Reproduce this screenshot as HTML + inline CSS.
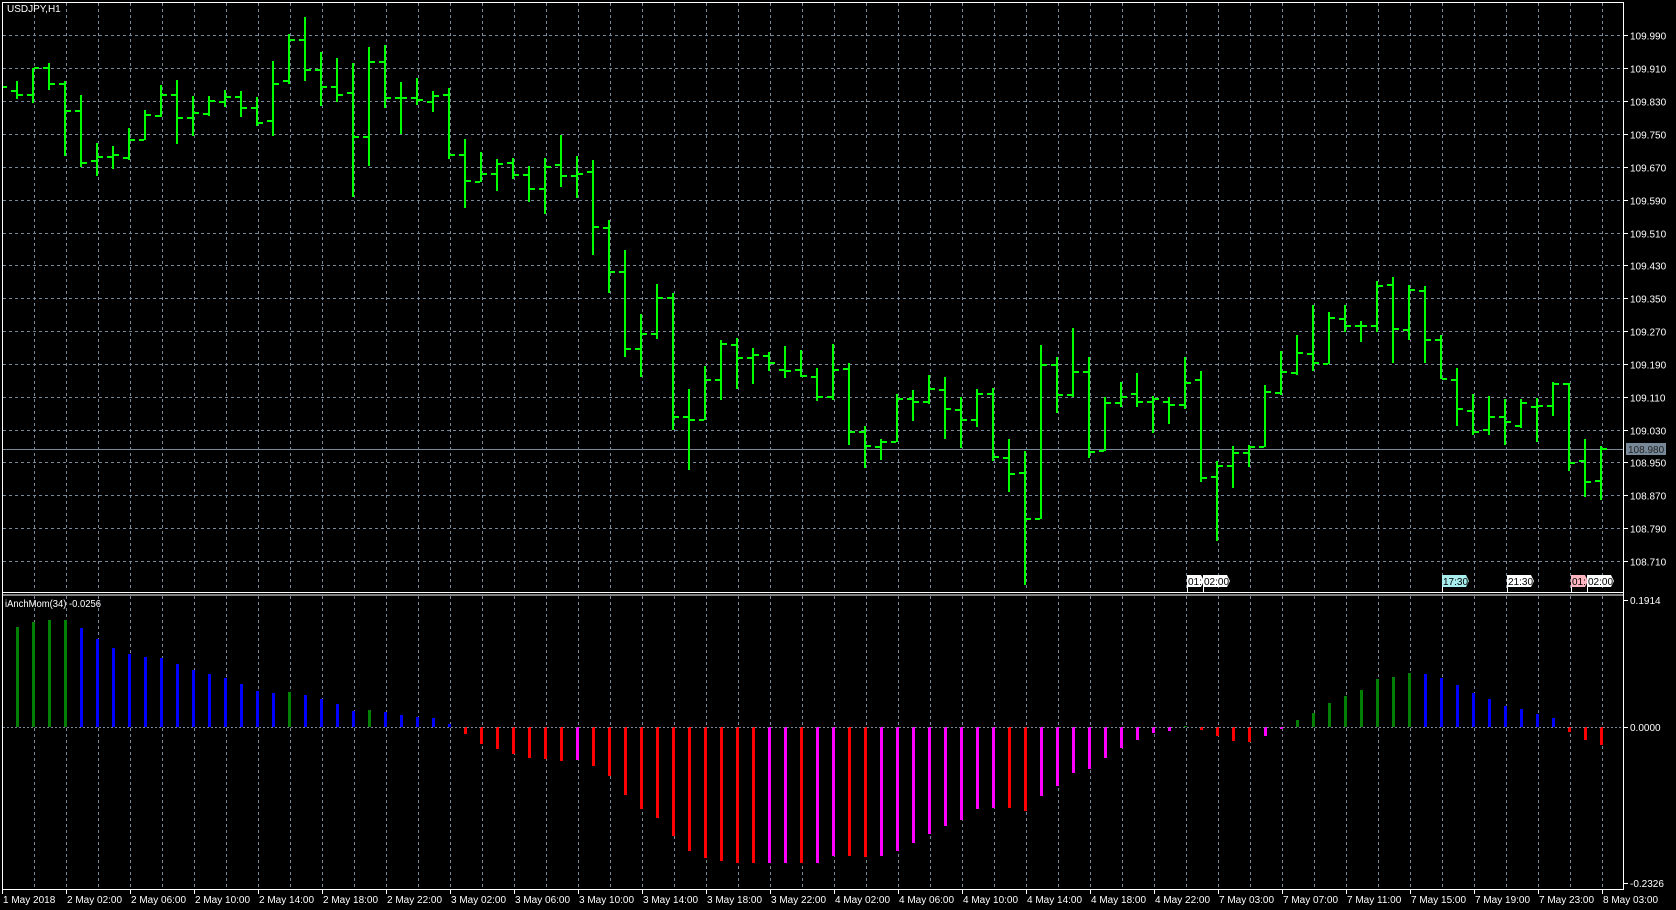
<!DOCTYPE html>
<html><head><meta charset="utf-8">
<style>
html,body{margin:0;padding:0;background:#000;overflow:hidden}
svg{display:block}
text{font-family:"Liberation Sans",sans-serif;font-size:10px;fill:#fff}
</style></head>
<body>
<svg id="s" width="1676" height="910" xmlns="http://www.w3.org/2000/svg" shape-rendering="crispEdges"></svg>
<script>
const S=document.getElementById('s');
let h='';
h+='<rect x="0" y="0" width="1676" height="910" fill="#000"/>';
const G='#778899';
for(let x=34;x<1623;x+=32){
 h+=`<line x1="${x+0.5}" y1="3" x2="${x+0.5}" y2="591" stroke="${G}" stroke-dasharray="3,3"/>`;
 h+=`<line x1="${x+0.5}" y1="596" x2="${x+0.5}" y2="888" stroke="${G}" stroke-dasharray="3,3"/>`;
}
const labs=["109.990","109.910","109.830","109.750","109.670","109.590","109.510","109.430","109.350","109.270","109.190","109.110","109.030","108.950","108.870","108.790","108.710"];
for(let k=0;k<labs.length;k++){
 const y=Math.round(35.4+32.85*k)+0.5;
 h+=`<line x1="3" y1="${y}" x2="1623" y2="${y}" stroke="${G}" stroke-dasharray="3,3"/>`;
 h+=`<line x1="1623" y1="${y}" x2="1628" y2="${y}" stroke="#fff"/>`;
 h+=`<text x="1630" y="${y+4}">${labs[k]}</text>`;
}
h+=`<line x1="3" y1="449.5" x2="1623" y2="449.5" stroke="${G}"/>`;
h+=`<rect x="1626" y="443" width="40" height="12" fill="${G}"/>`;
h+=`<text x="1628" y="453" style="fill:#222">108.980</text>`;
const B=[[215,262,243,252],[180,275,252,180],[168,240,180,222],[215,415,222,295],[253,444,295,433],[380,468,427,416],[389,450,416,411],[341,425,419,371],[292,372,372,305],[227,312,308,252],[213,382,252,313],[256,362,313,301],[256,308,302,269],[240,285,270,257],[243,312,259,286],[258,335,286,326],[163,362,321,222],[90,224,214,107],[44,214,107,187],[138,283,187,232],[155,272,232,252],[168,524,248,364],[126,442,364,166],[120,288,166,260],[218,357,260,260],
[208,278,260,265],[242,298,270,255],[235,422,252,413],[370,552,413,480],[405,485,483,462],[423,507,462,436],[420,477,432,464],[442,538,464,502],[420,568,502,443],[359,498,438,469],[415,525,469,462],[425,679,456,603],[585,780,605,722],[664,948,722,927],[834,1003,927,889],[755,900,889,793],[779,1142,793,1108],[1034,1250,1108,1116],[973,1117,1116,1010],[905,1062,1010,914],[899,1033,916,951],[925,1020,951,943],[935,985,945,964],[920,1004,983,986],[931,1003,983,999],[978,1067,1001,1054],
[914,1062,1054,983],[966,1182,980,1148],[1132,1245,1148,1185],[1167,1224,1188,1174],[1047,1175,1174,1060],[1036,1118,1060,1068],[996,1075,1068,1033],[1003,1166,1036,1086],[1055,1191,1089,1116],[1034,1134,1116,1046],[1031,1225,1046,1214],[1167,1308,1217,1260],[1199,1555,1256,1380],[917,1380,1380,969],[949,1099,969,1049],[872,1056,1049,988],[948,1218,988,1201],[1055,1198,1198,1071],[1015,1081,1071,1054],[991,1081,1046,1068],[1052,1150,1068,1060],[1055,1128,1068,1076],[948,1086,1076,1017],[986,1280,1010,1270],[1225,1437,1267,1238],[1186,1298,1238,1204],
[1184,1240,1204,1189],[1024,1188,1188,1041],[932,1049,1045,988],[890,996,991,937],[810,985,940,964],[829,968,968,845],[810,882,847,867],[853,908,867,866],[746,882,866,759],[735,965,757,875],[757,905,877,770],[760,965,773,903],[890,1007,903,1007],[978,1131,1010,1088],[1046,1157,1092,1147],[1052,1155,1144,1108],[1061,1182,1108,1121],[1061,1138,1133,1072],[1058,1174,1082,1080],[1016,1107,1078,1022],[1018,1252,1020,1230],[1168,1320,1226,1280],[1185,1330,1278,1193]];
const C='#00ff00';
const f=v=>Math.round(v/2.658);
h+=`<rect x="3" y="${f(230)-1}" width="4" height="2" fill="${C}"/>`;
B.forEach((b,i)=>{
 const x=17+16*i;
 const yh=f(b[0]),yl=f(b[1]),yo=f(b[2]),yc=f(b[3]);
 h+=`<rect x="${x-1}" y="${yh}" width="2" height="${Math.max(1,yl-yh)}" fill="${C}"/>`;
 h+=`<rect x="${x-6}" y="${yo-1}" width="5" height="2" fill="${C}"/>`;
 h+=`<rect x="${x+1}" y="${yc-1}" width="5" height="2" fill="${C}"/>`;
});
const Z=727;
const I=[[117,'g'],[101,'g'],[96,'g'],[96,'g'],[120,'b'],[153,'b'],[180,'b'],[198,'b'],[207,'b'],[210,'b'],[228,'b'],[246,'b'],[258,'b'],[270,'b'],[288,'b'],[310,'b'],[315,'b'],[312,'g'],[321,'b'],[333,'b'],[348,'b'],[369,'b'],[366,'g'],[372,'b'],[381,'b'],[387,'b'],[390,'b'],[407,'b'],
[437,'r'],[467,'r'],[482,'r'],[497,'r'],[510,'r'],[513,'r'],[518,'r'],[515,'m'],[533,'r'],[563,'r'],[620,'r'],[662,'r'],[689,'r'],[743,'r'],[789,'r'],[809,'r'],[818,'r'],[824,'r'],[824,'r'],[824,'m'],[824,'m'],[824,'r'],[824,'m'],[803,'m'],
[803,'r'],[806,'r'],[803,'m'],[788,'m'],[764,'m'],[737,'m'],[713,'m'],[695,'m'],[662,'m'],[659,'m'],[659,'r'],[668,'r'],[623,'m'],[593,'m'],[554,'m'],[542,'m'],[509,'m'],[479,'m'],[455,'m'],[434,'m'],[428,'m'],[414,'g'],[425,'r'],[443,'r'],[458,'r'],[461,'r'],[443,'m'],[422,'m'],[396,'g'],[375,'g'],[345,'g'],[324,'g'],[306,'g'],[273,'g'],[267,'g'],[255,'g'],[258,'b'],[269,'b'],[291,'b'],[315,'b'],[333,'b'],[354,'b'],[363,'b'],[378,'b'],[390,'b'],[431,'r'],[455,'r'],[470,'r']];
const col={g:'#008000',b:'#0000ff',r:'#ff0000',m:'#ff00ff'};
I.forEach((d,i)=>{
 const x=17+16*i;
 const y=Math.round(588+d[0]/3);
 const y1=Math.min(y,Z),y2=Math.max(y,Z);
 h+=`<rect x="${x-1}" y="${y1}" width="3" height="${Math.max(1,y2-y1)}" fill="${col[d[1]]}"/>`;
});
h+=`<line x1="3" y1="727.5" x2="1623" y2="727.5" stroke="${G}" stroke-dasharray="2,2"/>`;
h+=`<line x1="2" y1="2.5" x2="1624" y2="2.5" stroke="#fff"/>`;
h+=`<line x1="2.5" y1="2" x2="2.5" y2="890" stroke="#fff"/>`;
h+=`<line x1="1623.5" y1="2" x2="1623.5" y2="890" stroke="#fff"/>`;
h+=`<line x1="2" y1="592.5" x2="1624" y2="592.5" stroke="#fff"/>`;
h+=`<line x1="2" y1="595" x2="1624" y2="595" stroke="#fff"/>`;
h+=`<line x1="2" y1="889.5" x2="1624" y2="889.5" stroke="#fff"/>`;
[[600,"0.1914"],[727,"0.0000"],[883,"-0.2326"]].forEach(([y,t])=>{
 h+=`<line x1="1623" y1="${y+0.5}" x2="1628" y2="${y+0.5}" stroke="#fff"/>`;
 h+=`<text x="1630" y="${y+4}">${t}</text>`;
});
h+=`<text x="7" y="12">USDJPY,H1</text>`;
h+=`<text x="5" y="607" style="font-size:10px" textLength="96" lengthAdjust="spacingAndGlyphs">iAnchMom(34) -0.0256</text>`;
function flag(x,w,t,bg){
 h+=`<path d="M${x} 575 h${w} l3 6 l-3 6 h-${w} z" fill="${bg}"/>`;
 h+=`<line x1="${x+0.5}" y1="587" x2="${x+0.5}" y2="592" stroke="#fff"/>`;
 h+=`<text x="${x+1}" y="585" style="fill:#000">${t}</text>`;
}
flag(1187,14,"01:","#ffffff");flag(1203,24,"02:00","#ffffff");
flag(1442,24,"17:30","#a8eeee");flag(1507,24,"21:30","#ffffff");
flag(1571,14,"01:","#ffb6c1");flag(1587,24,"02:00","#ffffff");
const T=["1 May 2018","2 May 02:00","2 May 06:00","2 May 10:00","2 May 14:00","2 May 18:00","2 May 22:00","3 May 02:00","3 May 06:00","3 May 10:00","3 May 14:00","3 May 18:00","3 May 22:00","4 May 02:00","4 May 06:00","4 May 10:00","4 May 14:00","4 May 18:00","4 May 22:00","7 May 03:00","7 May 07:00","7 May 11:00","7 May 15:00","7 May 19:00","7 May 23:00","8 May 03:00"];
T.forEach((t,k)=>{
 const x=2+64*k;
 h+=`<line x1="${x+0.5}" y1="889" x2="${x+0.5}" y2="894" stroke="#fff"/>`;
 h+=`<text x="${x+1}" y="903">${t}</text>`;
});
S.innerHTML=h;
</script>
</body></html>
